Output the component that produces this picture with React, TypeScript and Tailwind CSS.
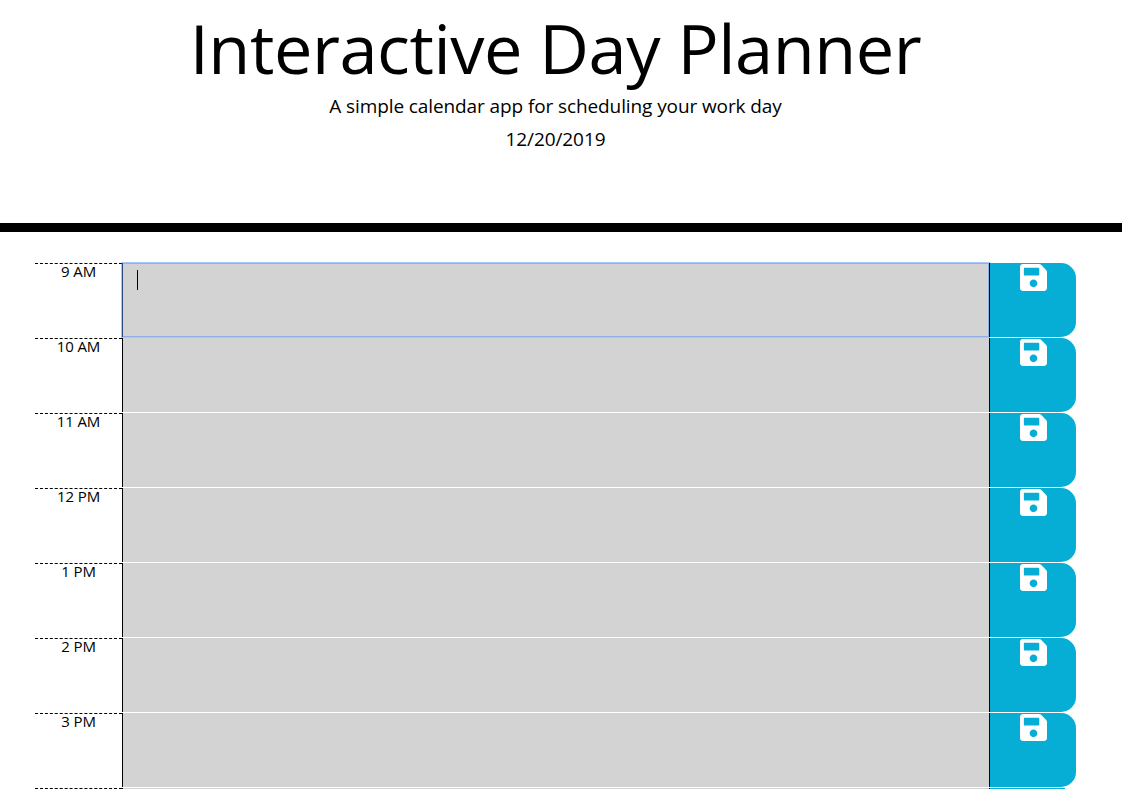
import { FaSave } from "react-icons/fa";

const hours = ["9 AM", "10 AM", "11 AM", "12 PM", "1 PM", "2 PM", "3 PM"];

function TimeBlock({ hour, active }: { hour: string; active: boolean }) {
  return (
    <div className="flex h-[75px] shrink-0">
      <div className="w-[87px] shrink-0">
        <div className="border-t border-dashed border-black" />
        <div className="text-center text-[15px] leading-[15px] tracking-[-0.1px]">{hour}</div>
      </div>
      <div
        className={
          active
            ? "h-[74px] w-[867px] border-l border-black bg-[#d3d3d3] px-[14px] pt-[7px] outline-2 -outline-offset-1 outline-[#4d90fe]/50"
            : "h-[74px] w-[867px] border-l border-black bg-[#d3d3d3]"
        }
      >
        {active && <div className="h-5 w-px bg-black" />}
      </div>
      <button className="relative flex h-[74px] w-[87px] items-start justify-center rounded-r-[15px] border-l border-black bg-[#06aed5] text-white">
        <FaSave className="-mt-px h-[31px] w-[27px]" />
      </button>
    </div>
  );
}

export default function App() {
  return (
    <div className="flex h-[789px] flex-col overflow-hidden bg-white font-['Open_Sans',sans-serif] text-black">
      <header className="flex h-[232px] shrink-0 flex-col items-center border-b-[9px] border-black pr-[11px] pt-[6px]">
        <h1 className="text-[68.5px] leading-[84px] tracking-[-0.45px]">Interactive Day Planner</h1>
        <p className="text-[19px] leading-[32px] tracking-[-0.1px]">A simple calendar app for scheduling your work day</p>
        <p className="text-[19px] leading-[34px] tracking-[-0.1px]">12/20/2019</p>
      </header>
      <main className="flex flex-col pl-[35px] pt-[31px]">
        {hours.map((hour, i) => (
          <TimeBlock key={hour} hour={hour} active={i === 0} />
        ))}
        <div className="flex h-px">
          <div className="w-[87px] border-t border-dashed border-black" />
          <div className="w-[867px] border-l border-black bg-[#d3d3d3]" />
          <div className="w-[76px] border-l border-black bg-[#06aed5]" />
        </div>
      </main>
    </div>
  );
}
